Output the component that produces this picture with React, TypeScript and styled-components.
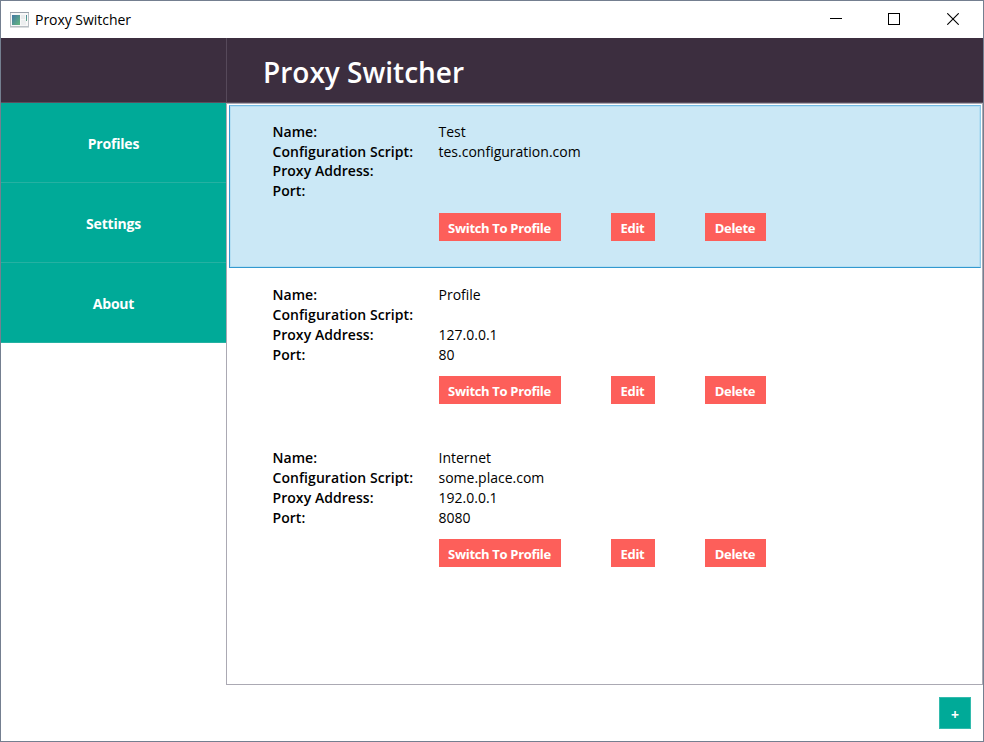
import React from "react";
import styled, { createGlobalStyle } from "styled-components";

const Global = createGlobalStyle`
  * { box-sizing: border-box; }
  body { margin: 0; background: #fff; }
  button { font-family: inherit; cursor: pointer; }
`;

const Window = styled.div`
  width: 984px;
  height: 742px;
  display: flex;
  flex-direction: column;
  border: 1px solid #747f90;
  background: #fff;
  color: #000;
  font-family: "Open Sans", "Noto Sans", sans-serif;
  overflow: hidden;
`;

const TitleBar = styled.div`
  flex: none;
  height: 37px;
  display: flex;
  align-items: center;
  padding-left: 9px;
`;

const TitleText = styled.span`
  flex: 1;
  margin-left: 6px;
  font-size: 14px;
  line-height: 20px;
  letter-spacing: -0.03px;
`;

const CaptionButtons = styled.div`
  align-self: flex-start;
  display: grid;
  grid-template-columns: 58px 58px 60px;
`;

const CaptionButton = styled.button`
  height: 36px;
  display: flex;
  align-items: center;
  justify-content: center;
  padding: 0;
  border: 0;
  background: transparent;
`;

const Header = styled.header`
  flex: none;
  height: 65px;
  display: flex;
  background: #3c2e3f;
  border-bottom: 1px solid #5a4e5e;
`;

const HeaderSide = styled.div`
  width: 226px;
  border-right: 1px solid #56495a;
`;

const Heading = styled.h1`
  margin: 0;
  padding: 14px 0 0 36px;
  color: #fff;
  font-size: 28px;
  line-height: 40px;
  font-weight: 600;
  letter-spacing: 0;
`;

const Main = styled.div`
  flex: 1;
  min-height: 0;
  display: flex;
`;

const Sidebar = styled.nav`
  flex: none;
  width: 225px;
`;

const NavButton = styled.button`
  display: block;
  width: 100%;
  height: 80px;
  padding: 2px 0 0;
  border: 0;
  border-bottom: 1px solid #25b1a2;
  background: #00aa98;
  color: #fff;
  font-size: 14px;
  font-weight: 700;
  letter-spacing: -0.2px;
`;

const Content = styled.main`
  flex: 1;
  display: flex;
  flex-direction: column;
`;

const ProfileList = styled.div`
  height: 582px;
  padding: 1px 1px 1px 2px;
  border: 1px solid #aba9b3;
`;

const Field = styled.div`
  display: flex;
  height: 20px;
  font-size: 14px;
  line-height: 20px;
`;

const Profile = styled.section<{ $selected?: boolean }>`
  height: 163px;
  padding: 16px 0 0 42.5px;
  border: 1px solid;
  border-color: ${(p) => (p.$selected ? "#74bbe4 #8fc9e8 #3399cf #3399cf" : "transparent")};
  background: ${(p) => (p.$selected ? "#cbe8f6" : "transparent")};
  box-shadow: ${(p) => (p.$selected ? "inset 0 0 0 1px #b5dff3" : "none")};

  ${Field}:nth-child(2) {
    height: ${(p) => (p.$selected ? 19 : 20)}px;
  }
`;

const Label = styled.span`
  width: 166px;
  font-weight: 600;
  letter-spacing: 0.06px;
`;

const Value = styled.span`
  letter-spacing: 0;
`;

const Actions = styled.div<{ $selected?: boolean }>`
  display: flex;
  gap: 50px;
  margin: ${(p) => (p.$selected ? 12 : 11)}px 0 0 166px;
`;

const ActionButton = styled.button<{ $width: number }>`
  width: ${(p) => p.$width}px;
  height: 28px;
  padding: 2px 0 0;
  border: 0;
  background: #fd5f5a;
  color: #fff;
  font-size: 13px;
  font-weight: 700;
  letter-spacing: -0.32px;
  white-space: nowrap;
`;

const Footer = styled.footer`
  flex: 1;
  display: flex;
  justify-content: flex-end;
  padding: 12px 12px 0 0;
`;

const AddButton = styled.button`
  width: 32px;
  height: 32px;
  padding: 2px 0 0;
  border: 1px solid #33bbad;
  background: #00aa98;
  color: #fff;
  font-size: 14px;
  font-weight: 700;
`;

const profiles = [
  { name: "Test", script: "tes.configuration.com", address: "", port: "" },
  { name: "Profile", script: "", address: "127.0.0.1", port: "80" },
  { name: "Internet", script: "some.place.com", address: "192.0.0.1", port: "8080" },
];

const AppIcon = () => (
  <svg width="19" height="16" viewBox="0 0 19 16" shapeRendering="crispEdges">
    <defs>
      <linearGradient id="screen" x1="0" y1="0" x2="1" y2="1">
        <stop offset="0" stopColor="#4377a5" />
        <stop offset="1" stopColor="#64b97d" />
      </linearGradient>
    </defs>
    <rect x="0.5" y="0.5" width="18" height="14" fill="#f8f8f8" stroke="#b9bfc4" />
    <rect x="0" y="0" width="19" height="1" fill="#9aa2ab" />
    <rect x="2" y="3" width="8" height="10" fill="url(#screen)" />
    <rect x="11" y="3" width="4" height="4" fill="#e9ebec" />
    <rect x="11" y="8" width="5" height="5" fill="#eceeef" />
    <rect x="16" y="3" width="1" height="6" fill="url(#screen)" />
    <rect x="0" y="15" width="19" height="1" fill="#d9dcde" />
  </svg>
);

export default function App() {
  return (
    <Window>
      <Global />
      <TitleBar>
        <AppIcon />
        <TitleText>Proxy Switcher</TitleText>
        <CaptionButtons>
          <CaptionButton aria-label="Minimize">
            <svg width="12" height="12" shapeRendering="crispEdges"><rect y="5" width="12" height="1" /></svg>
          </CaptionButton>
          <CaptionButton aria-label="Maximize">
            <svg width="12" height="12" shapeRendering="crispEdges"><rect x="0.5" y="0.5" width="11" height="11" fill="none" stroke="#000" /></svg>
          </CaptionButton>
          <CaptionButton aria-label="Close">
            <svg width="12" height="12"><path d="M.3 .3 11.7 11.7M11.7 .3 .3 11.7" stroke="#000" strokeWidth="1.1" /></svg>
          </CaptionButton>
        </CaptionButtons>
      </TitleBar>
      <Header>
        <HeaderSide />
        <Heading>Proxy Switcher</Heading>
      </Header>
      <Main>
        <Sidebar>
          {["Profiles", "Settings", "About"].map((item) => (
            <NavButton key={item}>{item}</NavButton>
          ))}
        </Sidebar>
        <Content>
          <ProfileList>
            {profiles.map((p, i) => (
              <Profile key={p.name} $selected={i === 0}>
                <Field><Label>Name:</Label><Value>{p.name}</Value></Field>
                <Field><Label>Configuration Script:</Label><Value>{p.script}</Value></Field>
                <Field><Label>Proxy Address:</Label><Value>{p.address}</Value></Field>
                <Field><Label>Port:</Label><Value>{p.port}</Value></Field>
                <Actions $selected={i === 0}>
                  <ActionButton $width={122}>Switch To Profile</ActionButton>
                  <ActionButton $width={44}>Edit</ActionButton>
                  <ActionButton $width={61}>Delete</ActionButton>
                </Actions>
              </Profile>
            ))}
          </ProfileList>
          <Footer><AddButton aria-label="Add profile">+</AddButton></Footer>
        </Content>
      </Main>
    </Window>
  );
}
